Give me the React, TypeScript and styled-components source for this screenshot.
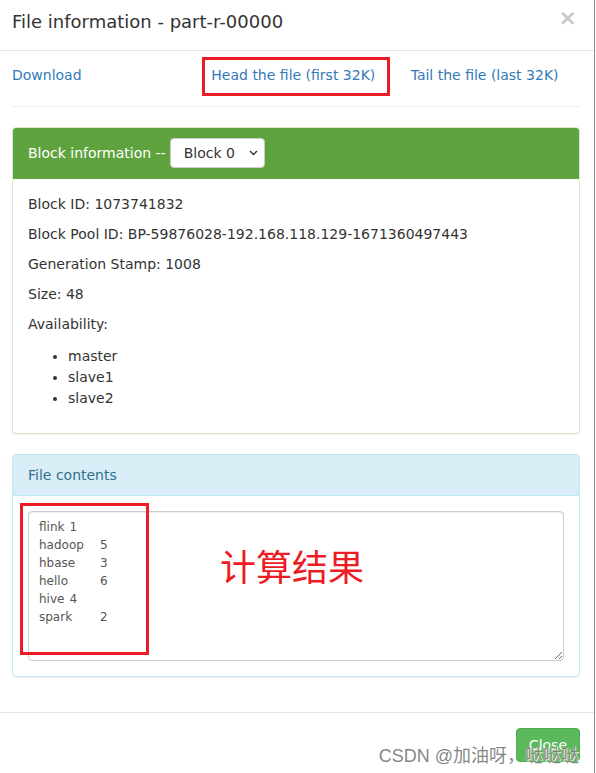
import React from "react";
import styled, { createGlobalStyle, css } from "styled-components";

const Global = createGlobalStyle`
  html, body { margin: 0; padding: 0; background: #ffffff; }
  body { font-family: "DejaVu Sans", "Noto Sans", sans-serif; font-size: 14px; line-height: 20px; color: #333333; }
  * { box-sizing: border-box; }
`;

const Page = styled.div`
  position: relative;
  width: 596px;
  height: 773px;
  overflow: hidden;
  background: #ffffff;
`;

const Modal = styled.div`
  width: 595px;
  min-height: 773px;
  background: #ffffff;
  border-right: 1px solid #8a8a8a;
`;

const Header = styled.div`
  display: flex;
  justify-content: space-between;
  align-items: flex-start;
  padding: 9px 14px 15px 12px;
  border-bottom: 1px solid #e5e5e5;
`;

const Title = styled.h4`
  margin: 0;
  font-size: 18px;
  font-weight: normal;
  line-height: 25.7px;
  color: #333333;
`;

const CloseX = styled.button`
  border: 0;
  background: transparent;
  padding: 0 3px 0 0;
  font-family: "DejaVu Sans", sans-serif;
  font-size: 22px;
  font-weight: bold;
  line-height: 18px;
  color: #c8c8c8;
  cursor: pointer;
`;

const Body = styled.div`
  padding: 14px 14px 15px 12px;
`;

const LinkRow = styled.div`
  display: grid;
  grid-template-columns: repeat(3, 1fr);
  margin: 0 -15px;
`;

const LinkCol = styled.div`
  padding: 0 15px;
`;

const Link = styled.a`
  color: #337ab7;
  text-decoration: none;
  font-size: 14px;
  line-height: 20px;
`;

const Rule = styled.hr`
  margin: 21px 0 20px;
  border: 0;
  border-top: 1px solid #eeeeee;
`;

type Variant = "success" | "info";

const Panel = styled.div<{ $variant: Variant }>`
  margin-bottom: 20px;
  border-radius: 4px;
  background: #ffffff;
  box-shadow: 0 1px 1px rgba(0, 0, 0, 0.05);
  border: 1px solid ${(p) => (p.$variant === "success" ? "#d6e9c6" : "#bce8f1")};
`;

const PanelHeading = styled.div<{ $variant: Variant }>`
  display: flex;
  align-items: center;
  gap: 4px;
  padding: 10px 15px;
  border-top-left-radius: 3px;
  border-top-right-radius: 3px;
  ${(p) =>
    p.$variant === "success"
      ? css`
          background: #5fa33e;
          color: #ffffff;
          border-bottom: 1px solid #5fa33e;
        `
      : css`
          background: #d9edf7;
          color: #31708f;
          border-bottom: 1px solid #bce8f1;
        `}
`;

const SelectWrap = styled.div`
  position: relative;
  width: 95px;
  height: 30px;
`;

const Select = styled.select`
  appearance: none;
  -webkit-appearance: none;
  width: 100%;
  height: 100%;
  padding: 0 12px 0 13px;
  font-family: "DejaVu Sans", sans-serif;
  font-size: 14px;
  color: #333333;
  background: #ffffff;
  border: 1px solid #cccccc;
  border-radius: 4px;
  outline: none;
`;

const Chevron = styled.svg`
  position: absolute;
  right: 7px;
  top: 12px;
  width: 9px;
  height: 6px;
  pointer-events: none;
`;

const PanelBody = styled.div`
  padding: 15px;
`;

const Para = styled.p`
  margin: 0 0 10px;
  line-height: 20px;
`;

const List = styled.ul`
  margin: 0 0 9px;
  padding: 2px 0 0 40px;
`;

const Item = styled.li`
  line-height: 21px;
`;

const Contents = styled.textarea`
  display: block;
  width: 100%;
  height: 150px;
  margin: 0;
  padding: 6px 10px;
  font-family: "DejaVu Sans", sans-serif;
  font-size: 12px;
  line-height: 18px;
  color: #555555;
  background: #ffffff;
  border: 1px solid #cccccc;
  border-radius: 4px;
  box-shadow: inset 0 1px 1px rgba(0, 0, 0, 0.075);
  tab-size: 8;
  resize: vertical;
  outline: none;
`;

const Footer = styled.div`
  display: flex;
  justify-content: flex-end;
  padding: 15px 14px 15px 15px;
  border-top: 1px solid #e5e5e5;
`;

const Button = styled.button`
  padding: 6px 12px;
  font-family: "DejaVu Sans", sans-serif;
  font-size: 14px;
  line-height: 20px;
  color: #ffffff;
  background: #5cb85c;
  border: 1px solid #4cae4c;
  border-radius: 4px;
  cursor: pointer;
`;

const RedBox = styled.div`
  position: absolute;
  border: 3px solid #ed1c24;
  pointer-events: none;
`;

const Annotation = styled.div`
  position: absolute;
  left: 220px;
  top: 543px;
  font-family: "Noto Sans CJK SC", sans-serif;
  font-size: 36px;
  line-height: 44px;
  color: #ed1c24;
  pointer-events: none;
`;

const Watermark = styled.div`
  position: absolute;
  right: 17px;
  top: 743px;
  font-family: "Liberation Sans", "Noto Sans CJK SC", sans-serif;
  font-size: 18px;
  line-height: 26px;
  color: rgba(110, 110, 110, 0.85);
  text-shadow: 0 0 1px #ffffff, 1px 1px 0 rgba(255, 255, 255, 0.8);
  pointer-events: none;
  white-space: nowrap;
`;

const fileText = "flink\t1\nhadoop\t5\nhbase\t3\nhello\t6\nhive\t4\nspark\t2\n";

export default function App() {
  return (
    <Page>
      <Global />
      <Modal>
        <Header>
          <Title>File information - part-r-00000</Title>
          <CloseX aria-label="Close">×</CloseX>
        </Header>
        <Body>
          <LinkRow>
            <LinkCol>
              <Link href="#">Download</Link>
            </LinkCol>
            <LinkCol>
              <Link href="#">Head the file (first 32K)</Link>
            </LinkCol>
            <LinkCol>
              <Link href="#">Tail the file (last 32K)</Link>
            </LinkCol>
          </LinkRow>
          <Rule />
          <Panel $variant="success">
            <PanelHeading $variant="success">
              <span>Block information --</span>
              <SelectWrap>
                <Select defaultValue="0">
                  <option value="0">Block 0</option>
                </Select>
                <Chevron viewBox="0 0 9 6">
                  <path d="M1 1l3.5 3.5L8 1" fill="none" stroke="#333" strokeWidth="1.4" />
                </Chevron>
              </SelectWrap>
            </PanelHeading>
            <PanelBody>
              <Para>Block ID: 1073741832</Para>
              <Para>Block Pool ID: BP-59876028-192.168.118.129-1671360497443</Para>
              <Para>Generation Stamp: 1008</Para>
              <Para>Size: 48</Para>
              <Para>Availability:</Para>
              <List>
                <Item>master</Item>
                <Item>slave1</Item>
                <Item>slave2</Item>
              </List>
            </PanelBody>
          </Panel>
          <Panel $variant="info">
            <PanelHeading $variant="info">File contents</PanelHeading>
            <PanelBody>
              <Contents readOnly value={fileText} />
            </PanelBody>
          </Panel>
        </Body>
        <Footer>
          <Button>Close</Button>
        </Footer>
      </Modal>
      <RedBox style={{ left: 202, top: 57, width: 188, height: 39 }} />
      <RedBox style={{ left: 20, top: 503, width: 129, height: 152 }} />
      <Annotation>计算结果</Annotation>
      <Watermark>CSDN @加油呀，哒哒哒</Watermark>
    </Page>
  );
}
